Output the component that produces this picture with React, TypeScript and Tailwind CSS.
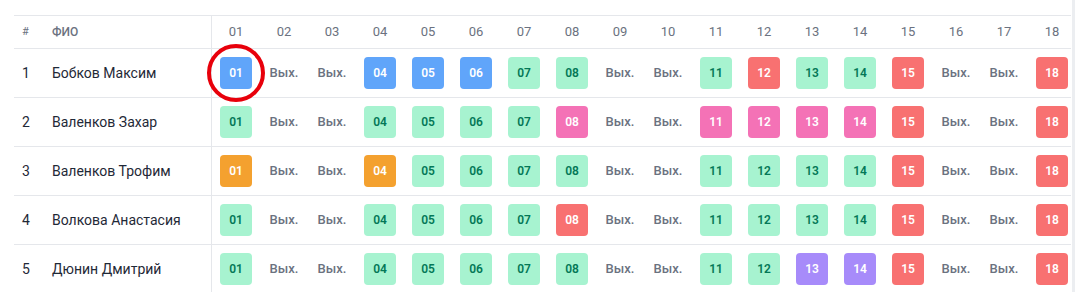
import { Fragment } from 'react'

type Kind = 'blue' | 'green' | 'red' | 'pink' | 'orange' | 'purple' | 'off'

const styles: Record<Exclude<Kind, 'off'>, string> = {
  blue: 'bg-[#60a5fa] text-white',
  green: 'bg-[#a7f3d0] text-[#047857]',
  red: 'bg-[#f87171] text-white',
  pink: 'bg-[#f472b6] text-white',
  orange: 'bg-[#f4a12f] text-white',
  purple: 'bg-[#a78bfa] text-white',
}

const b: Kind = 'blue', g: Kind = 'green', r: Kind = 'red', p: Kind = 'pink', o: Kind = 'orange', v: Kind = 'purple', x: Kind = 'off'

const rows: { name: string; days: Kind[] }[] = [
  { name: 'Бобков Максим', days: [b, x, x, b, b, b, g, g, x, x, g, r, g, g, r, x, x, r] },
  { name: 'Валенков Захар', days: [g, x, x, g, g, g, g, p, x, x, p, p, p, p, r, x, x, r] },
  { name: 'Валенков Трофим', days: [o, x, x, o, g, g, g, g, x, x, g, g, g, g, r, x, x, r] },
  { name: 'Волкова Анастасия', days: [g, x, x, g, g, g, g, r, x, x, g, g, g, g, r, x, x, r] },
  { name: 'Дюнин Дмитрий', days: [g, x, x, g, g, g, g, g, x, x, g, g, v, v, r, x, x, r] },
]

const days = Array.from({ length: 18 }, (_, i) => String(i + 1).padStart(2, '0'))

export default function App() {
  return (
    <div className="min-h-screen bg-white font-['Roboto',sans-serif] flex pt-[15px]">
      <div className="ml-[14px] w-[1057px] overflow-hidden">
        <div className="grid grid-cols-[30px_168px_repeat(18,48px)] w-max border-t border-[#e5e7eb]">
          <div className="h-[33px] border-b border-[#e5e7eb] flex items-center pl-2 text-[11px] text-[#6b7280]">#</div>
          <div className="h-[33px] border-b border-[#e5e7eb] border-r flex items-center pl-2 text-[12px] font-medium text-[#6b7280]">ФИО</div>
          {days.map((d) => (
            <div key={d} className="h-[33px] border-b border-[#e5e7eb] flex items-center justify-center text-[13px] text-[#6b7280]">{d}</div>
          ))}

          {rows.map((row, ri) => (
            <Fragment key={row.name}>
              <div className="h-[49px] border-b border-[#e5e7eb] flex items-center pl-2 text-[14px] text-[#1f2937]">{ri + 1}</div>
              <div className="h-[49px] border-b border-r border-[#e5e7eb] flex items-center pl-2 text-[14px] text-[#1f2937]">{row.name}</div>
              {row.days.map((k, di) => (
                <div key={di} className="relative h-[49px] border-b border-[#e5e7eb] flex items-center justify-center">
                  {k === 'off' ? (
                    <span className="text-[13px] font-medium text-[#6b7280]">Вых.</span>
                  ) : (
                    <span className={`w-8 h-8 rounded flex items-center justify-center text-[12px] font-semibold ${styles[k]}`}>{days[di]}</span>
                  )}
                  {ri === 0 && di === 0 && (
                    <span className="absolute left-[-5px] top-[-5px] w-[58px] h-[58px] rounded-full border-[4px] border-[#e8000b]" />
                  )}
                </div>
              ))}
            </Fragment>
          ))}
        </div>
      </div>
      <div className="ml-px w-[3px] bg-[#eceef1] self-stretch -mt-[15px]" />
    </div>
  )
}
